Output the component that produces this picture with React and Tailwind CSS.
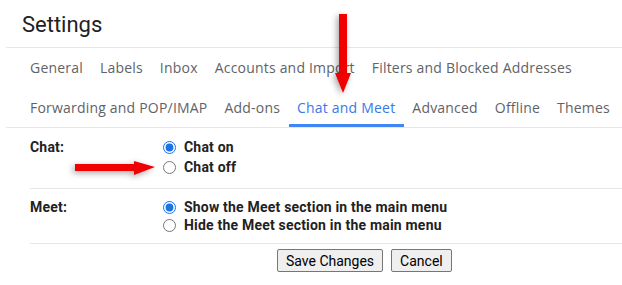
import React from 'react'

const tabsTop = ['General', 'Labels', 'Inbox', 'Accounts and Import', 'Filters and Blocked Addresses']
const tabsBottom = ['Forwarding and POP/IMAP', 'Add-ons', 'Chat and Meet', 'Advanced', 'Offline', 'Themes']

function Tab({ label, active }) {
  return (
    <div
      className={`h-full flex items-center px-[8.5px] whitespace-nowrap ${
        active ? 'text-[#3b78e7] border-b-[3px] border-[#4285f4] pt-[3px]' : 'text-[#5f6368]'
      }`}
    >
      {label}
    </div>
  )
}

function Radio({ checked, label }) {
  return (
    <label className="flex items-center gap-[8px]">
      <input type="radio" checked={checked} readOnly className="m-0 w-[13px] h-[13px] accent-[#1a73e8]" />
      <span>{label}</span>
    </label>
  )
}

export default function App() {
  return (
    <div className="relative w-[622px] h-[285px] bg-white overflow-hidden">
      <div className="ml-[6px] border-b border-[#e6e6e6] h-[48px]">
        <h1 className="pl-[16px] pt-[11px] text-[22px] leading-[28px] text-[#202124] font-['Roboto',sans-serif]">
          Settings
        </h1>
      </div>

      <div className="ml-[6px] border-b border-[#e6e6e6] font-['Open_Sans',sans-serif] text-[14px] tracking-[0.2px]">
        <div className="flex h-[39px] pl-[15.5px]">
          {tabsTop.map((t) => (
            <Tab key={t} label={t} />
          ))}
        </div>
        <div className="flex h-[40px] pl-[15.5px]">
          {tabsBottom.map((t) => (
            <Tab key={t} label={t} active={t === 'Chat and Meet'} />
          ))}
        </div>
      </div>

      <div className="pl-[30px] font-['Roboto',sans-serif] text-[14px] text-[#222] font-bold tracking-[0.2px]">
        <div className="flex border-b border-[#e6e6e6] pt-[9px] pb-[11px]">
          <div className="w-[133px] leading-[20px]">Chat:</div>
          <div className="flex flex-col leading-[20px]">
            <Radio checked label="Chat on" />
            <Radio label="Chat off" />
          </div>
        </div>
        <div className="flex border-b border-[#e6e6e6] pt-[9px] pb-[9px]">
          <div className="w-[133px] leading-[18px]">Meet:</div>
          <div className="flex flex-col leading-[18px]">
            <Radio checked label="Show the Meet section in the main menu" />
            <Radio label="Hide the Meet section in the main menu" />
          </div>
        </div>
        <div className="flex gap-[8px] pl-[247px] pt-[5px] font-normal text-black text-[14px] leading-[18px] tracking-normal">
          <button className="h-[23px] px-[8px] bg-[#efefef] border border-[#767676] rounded-[2px] whitespace-nowrap">
            Save Changes
          </button>
          <button className="h-[23px] px-[8px] bg-[#efefef] border border-[#767676] rounded-[2px] whitespace-nowrap">
            Cancel
          </button>
        </div>
      </div>

      <svg
        className="absolute left-[325px] top-[8px] drop-shadow-[-2px_2px_3px_rgba(0,0,0,0.35)]"
        width="36"
        height="95"
        viewBox="0 0 36 95"
      >
        <polygon points="14,6 22,6 22,65 26,65 18,85 10,65 14,65" fill="#f00000" />
      </svg>

      <svg
        className="absolute left-[68px] top-[152px] drop-shadow-[-2px_2px_3px_rgba(0,0,0,0.35)]"
        width="95"
        height="30"
        viewBox="0 0 95 30"
      >
        <polygon points="7,12 66,12 66,9 87,15 66,23 66,19 7,19" fill="#f00000" />
      </svg>
    </div>
  )
}
